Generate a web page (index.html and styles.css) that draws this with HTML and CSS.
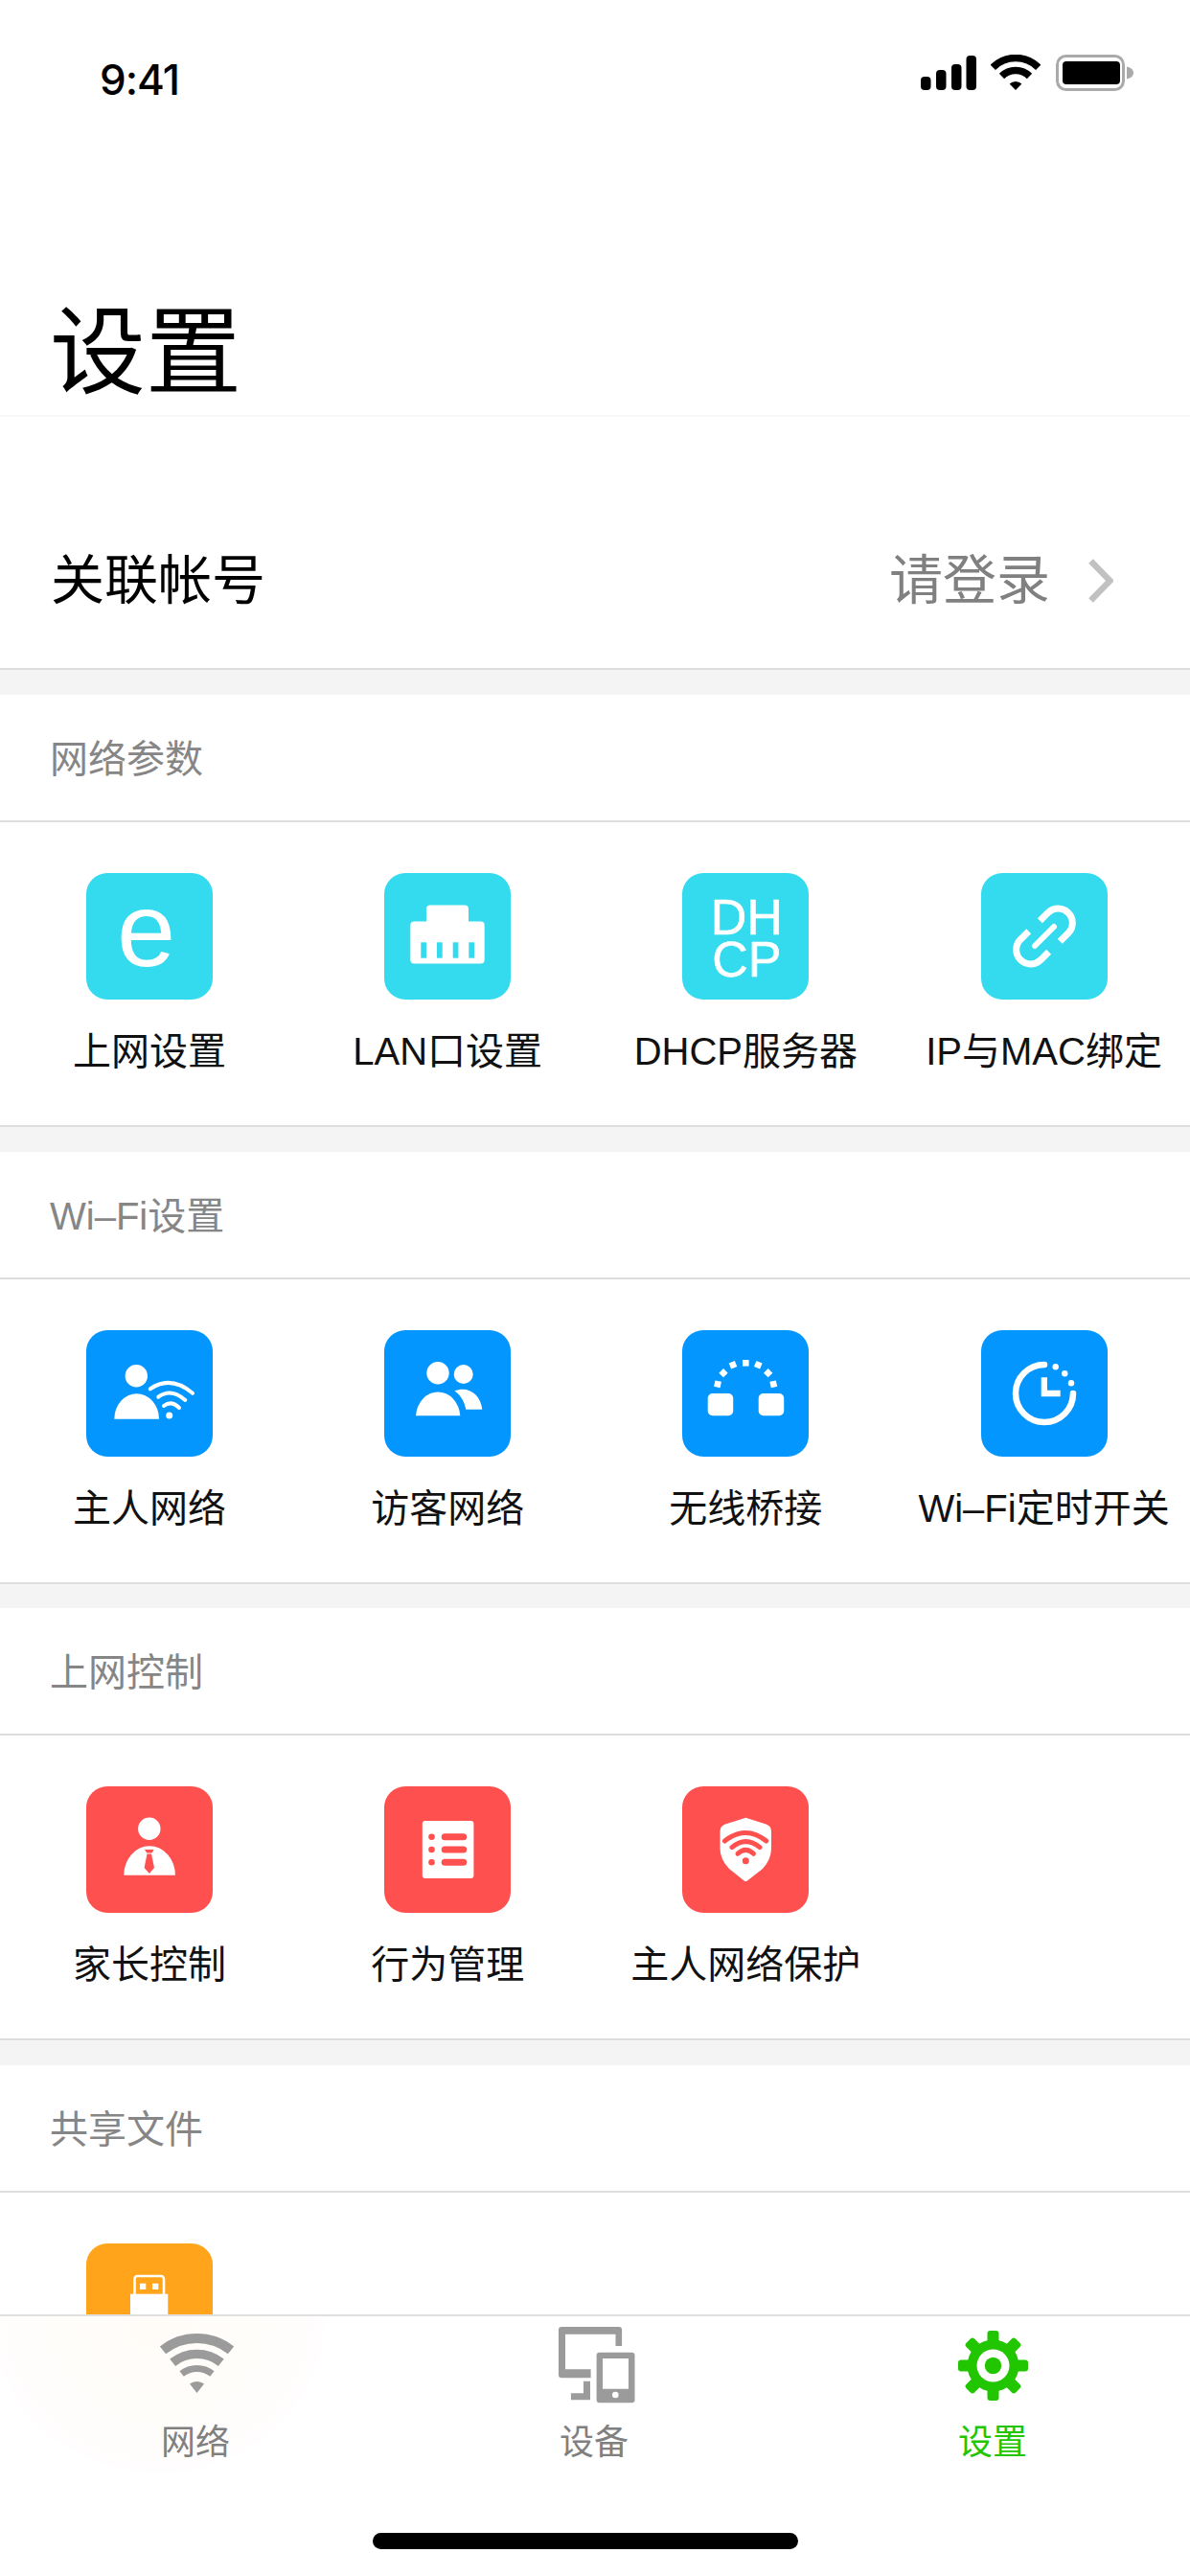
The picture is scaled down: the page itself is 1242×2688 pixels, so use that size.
FILE: index.html
```html
<!DOCTYPE html>
<html lang="zh-CN">
<head>
<meta charset="utf-8">
<title>设置</title>
<link rel="stylesheet" href="styles.css">
</head>
<body>
<div class="app">
  <div class="status">
    <span class="time">9:41</span>
    <div class="status-icons">
      <svg class="s-signal" width="58" height="36" viewBox="0 0 58 36"><rect x="0" y="22" width="10.5" height="14" rx="4"/><rect x="16" y="15" width="10.5" height="21" rx="4"/><rect x="32" y="9" width="10.5" height="27" rx="4"/><rect x="47.5" y="0" width="10.5" height="36" rx="4"/></svg>
      <svg class="s-wifi" width="52" height="37" viewBox="0 0 52 37"><path d="M2.3 13.3A33.5 33.5 0 0 1 49.7 13.3" fill="none" stroke="#000" stroke-width="7.5"/><path d="M11.5 22.5A20.5 20.5 0 0 1 40.5 22.5" fill="none" stroke="#000" stroke-width="7.5"/><path d="M26 37L19.6 30.6A9 9 0 0 1 32.4 30.6Z"/></svg>
      <svg class="s-batt" width="81" height="38" viewBox="0 0 81 38"><rect x="1.5" y="1.5" width="69" height="35" rx="9" fill="none" stroke="#aaa" stroke-width="3"/><rect x="7" y="7" width="60" height="24" rx="4"/><path d="M74 12.5Q81 14 81 19T74 25.5Z" fill="#aaa"/></svg>
    </div>
  </div>
  <header class="title-bar"><h1 class="title">设置</h1></header>
  <main class="content">
    <div class="account">
      <span class="account-name">关联帐号</span>
      <span class="account-action">请登录</span>
      <svg class="chevron" width="27" height="46" viewBox="0 0 27 46"><path d="M3.5 2.5L23.5 23L3.5 43.5" fill="none" stroke="#c1c1c1" stroke-width="6.5"/></svg>
    </div>

    <section class="group">
      <h2 class="group-title">网络参数</h2>
      <div class="grid">
        <div class="item">
          <div class="tile cyan tile-e">e</div>
          <span class="label">上网设置</span>
        </div>
        <div class="item">
          <svg class="tile cyan" viewBox="0 0 132 132"><path fill="#fff" d="M48 33.5H84Q88 33.5 88 37.5V50.5H100.7Q104.7 50.5 104.7 54.5V90.5Q104.7 94.5 100.7 94.5H31.3Q27.3 94.5 27.3 90.5V54.5Q27.3 50.5 31.3 50.5H44V37.5Q44 33.5 48 33.5Z"/><g fill="#34dbee"><rect x="38.3" y="72.3" width="5.7" height="16.4"/><rect x="55" y="72.3" width="5.7" height="16.4"/><rect x="71.7" y="72.3" width="5.7" height="16.4"/><rect x="88.3" y="72.3" width="5.7" height="16.4"/></g></svg>
          <span class="label">LAN口设置</span>
        </div>
        <div class="item">
          <div class="tile cyan tile-dhcp">DH<br>CP</div>
          <span class="label">DHCP服务器</span>
        </div>
        <div class="item">
          <svg class="tile cyan" viewBox="0 0 132 132"><g fill="none" stroke="#fff"><path stroke-width="7" d="M61.4 49.8L70.1 41.1A15 15 0 0 1 91.3 62.3L82.3 71.3"/><path stroke-width="7" d="M70.6 82.2L61.9 90.9A15 15 0 0 1 40.7 69.7L49.7 60.7"/><path stroke-width="6" stroke-linecap="round" d="M56 76L76 56"/></g></svg>
          <span class="label">IP与MAC绑定</span>
        </div>
      </div>
    </section>

    <section class="group">
      <h2 class="group-title">Wi–Fi设置</h2>
      <div class="grid">
        <div class="item">
          <svg class="tile blue" viewBox="0 0 132 132"><circle cx="52.3" cy="47.7" r="11.7" fill="#fff"/><path fill="#fff" d="M29.3 92.7A23.3 26.4 0 0 1 76 92.7Z"/><g fill="none" stroke="#fff" stroke-width="4" stroke-linecap="round"><path d="M66.7 61.3Q88 46.5 111 65.7"/><path d="M75.3 69.7Q88.5 60 103.3 73"/><path d="M81 79Q89 73 97 81"/></g><circle cx="86.7" cy="89" r="3.5" fill="#fff"/></svg>
          <span class="label">主人网络</span>
        </div>
        <div class="item">
          <svg class="tile blue" viewBox="0 0 132 132"><g fill="#fff"><circle cx="56" cy="44.7" r="11.7"/><circle cx="82.7" cy="46" r="10"/><path d="M33 89.3A23.2 26.6 0 0 1 79.3 89.3Z"/><path d="M73.3 63.3C87 58 100.5 66 102.3 82.7H85.3C83.5 74 79.5 67.5 73.3 63.3Z"/></g></svg>
          <span class="label">访客网络</span>
        </div>
        <div class="item">
          <svg class="tile blue" viewBox="0 0 132 132"><g fill="#fff"><rect x="26.7" y="66" width="26.5" height="23.3" rx="5"/><rect x="79.7" y="66" width="26.5" height="23.3" rx="5"/><rect x="63" y="31" width="6.6" height="6.6"/><rect x="49.7" y="33" width="6.6" height="6.6" transform="rotate(-22 53 36.3)"/><rect x="39.7" y="41.4" width="6.6" height="6.6" transform="rotate(-45 43 44.7)"/><rect x="33.7" y="53" width="6.6" height="6.6" transform="rotate(-78 37 56.3)"/><rect x="76" y="33" width="6.6" height="6.6" transform="rotate(22 79.3 36.3)"/><rect x="86.4" y="41.4" width="6.6" height="6.6" transform="rotate(45 89.7 44.7)"/><rect x="92" y="53" width="6.6" height="6.6" transform="rotate(78 95.3 56.3)"/></g></svg>
          <span class="label">无线桥接</span>
        </div>
        <div class="item">
          <svg class="tile blue" viewBox="0 0 132 132"><path fill="none" stroke="#fff" stroke-width="6.5" stroke-linecap="round" d="M66 36A30 30 0 1 0 96 66"/><g fill="#fff"><circle cx="77.7" cy="38.3" r="3.2"/><circle cx="87.3" cy="45.3" r="3.2"/><circle cx="94" cy="55.3" r="3.2"/><path d="M62.7 49.3H69V62.7H82.7V69.3H62.7Z"/></g></svg>
          <span class="label">Wi–Fi定时开关</span>
        </div>
      </div>
    </section>

    <section class="group">
      <h2 class="group-title">上网控制</h2>
      <div class="grid">
        <div class="item">
          <svg class="tile red" viewBox="0 0 132 132"><circle cx="65.8" cy="44.3" r="11.7" fill="#fff"/><path fill="#fff" d="M39.3 92.7A26.8 30.4 0 0 1 92.9 92.7Z"/><g fill="#ff5050"><path d="M61 66H70.7L68.5 69.5H63.2Z"/><path d="M63.5 70.5H68L71 85L65.8 91L60.6 85Z"/></g></svg>
          <span class="label">家长控制</span>
        </div>
        <div class="item">
          <svg class="tile red" viewBox="0 0 132 132"><rect x="39.8" y="36" width="53.6" height="60" rx="3" fill="#fff"/><g fill="#ff5050"><circle cx="49.5" cy="52.7" r="3.3"/><circle cx="49.5" cy="66" r="3.3"/><circle cx="49.5" cy="79.3" r="3.3"/><rect x="59.7" y="49.2" width="26.5" height="7" rx="3.5"/><rect x="59.7" y="62.5" width="26.5" height="7" rx="3.5"/><rect x="59.7" y="75.8" width="26.5" height="7" rx="3.5"/></g></svg>
          <span class="label">行为管理</span>
        </div>
        <div class="item">
          <svg class="tile red" viewBox="0 0 132 132"><path fill="#fff" d="M66.3 32.7L87.5 39.6Q93 41.5 93 47V65Q93 76 84 86L68 98.4Q66.3 100 64.6 98.4L49 86Q39.5 76 39.5 65V47Q39.5 41.5 45 39.6Z"/><g fill="none" stroke="#ff5050" stroke-width="5" stroke-linecap="round"><path d="M44.4 57Q66.3 40 87.8 57"/><path d="M52 63.7Q66.3 51.5 81 63.7"/><path d="M58 70.3Q66.3 62.5 74.5 70.3"/></g><circle cx="66.3" cy="77.7" r="3.5" fill="#ff5050"/></svg>
          <span class="label">主人网络保护</span>
        </div>
      </div>
    </section>

    <section class="group">
      <h2 class="group-title">共享文件</h2>
      <div class="grid">
        <div class="item">
          <svg class="tile orange" viewBox="0 0 132 132"><rect x="50.5" y="34" width="30.5" height="22" rx="3" fill="none" stroke="#fff" stroke-width="2.6"/><g fill="#fff"><rect x="56" y="41.7" width="6.3" height="6.3"/><rect x="69" y="41.7" width="6.3" height="6.3"/><rect x="46" y="52.7" width="39.3" height="48"/></g></svg>
        </div>
      </div>
    </section>
  </main>

  <nav class="tabbar">
    <div class="tabs">
      <div class="tab">
        <svg class="tab-icon" viewBox="0 0 90 80"><g transform="translate(7 7)"><g fill="none" stroke="#9b9b9b"><path stroke-width="10" d="M4 17.4A57 57 0 0 1 75 17.4"/><path stroke-width="9.4" d="M14.2 30.2A40.6 40.6 0 0 1 64.8 30.2"/><path stroke-width="7" d="M23.6 42A25.5 25.5 0 0 1 55.4 42"/></g><path fill="#9b9b9b" d="M39.5 62L32 52.6A12 12 0 0 1 47 52.6Z"/></g></svg>
        <span class="tab-label">网络</span>
      </div>
      <div class="tab">
        <svg class="tab-icon" viewBox="0 0 90 80"><g transform="translate(8 0)" fill="#9b9b9b"><path d="M3 0H63Q66.100 0 66.100 3V20H59.500V7.700H7V44.300H33.600V53.300H3Q0 53.300 0 50.300V3Q0 0 3 0Z"/><path d="M26 56.700H33V76.300H12.900V69.300H26Z"/><path fill-rule="evenodd" d="M42.600 26.700H76.500Q79.500 26.700 79.500 29.700V76.300Q79.500 79.300 76.500 79.300H42.600Q39.600 79.300 39.600 76.300V29.700Q39.600 26.700 42.600 26.700ZM46 33V64.700H73V33ZM59.300 67.700A3.300 3.300 0 1 0 59.300 74.300A3.300 3.300 0 1 0 59.300 67.700Z"/></g></svg>
        <span class="tab-label">设备</span>
      </div>
      <div class="tab active">
        <svg class="tab-icon" viewBox="0 0 90 80"><g transform="translate(9 4)"><g fill="#22c600"><circle cx="36.500" cy="36.500" r="27"/><rect x="30.500" y="0" width="12" height="73" rx="3"/><rect x="30.500" y="0" width="12" height="73" rx="3" transform="rotate(45 36.500 36.500)"/><rect x="30.500" y="0" width="12" height="73" rx="3" transform="rotate(90 36.500 36.500)"/><rect x="30.500" y="0" width="12" height="73" rx="3" transform="rotate(135 36.500 36.500)"/></g><circle cx="36.500" cy="36.500" r="17" fill="#fff"/><circle cx="36.500" cy="36.500" r="8.700" fill="#22c600"/></g></svg>
        <span class="tab-label">设置</span>
      </div>
    </div>
    <div class="home-bar"></div>
  </nav>
</div>
</body>
</html>
```

FILE: styles.css
```css
* { box-sizing: border-box; }
html, body { margin: 0; padding: 0; background: #fff; }
body {
  width: 1242px;
  height: 2688px;
  overflow: hidden;
  font-family: "Liberation Sans", "Noto Sans CJK SC", sans-serif;
  color: #000;
}
.app {
  width: 1242px;
  height: 2688px;
  display: flex;
  flex-direction: column;
}

/* Status bar */
.status {
  height: 130px;
  flex: none;
  display: flex;
  justify-content: space-between;
  align-items: flex-start;
  padding: 57px 59px 0 104px;
}
.time {
  font-family: Inter, "Liberation Sans", sans-serif;
  font-weight: 500;
  font-size: 44px;
  line-height: 50px;
  letter-spacing: -1px;
  margin-top: 1px;
}
.status-icons { display: flex; align-items: flex-end; }
.s-signal { margin-bottom: 1px; }
.s-wifi { margin-left: 15px; margin-bottom: 1px; }
.s-batt { margin-left: 16px; }

/* Title */
.title-bar {
  height: 305px;
  flex: none;
  padding: 181px 0 0 52px;
  border-bottom: 2px solid #f8f8f8;
}
.title {
  margin: 0;
  font-size: 100px;
  line-height: 114px;
  font-weight: 400;
}

/* Content */
.content {
  flex: 1;
  min-height: 0;
  overflow: hidden;
  background: #f4f4f4;
}
.account {
  height: 264px;
  margin-bottom: 26px;
  padding: 80px 80px 0 53px;
  display: flex;
  align-items: center;
  border-bottom: 2px solid #ddd;
  background: #fff;
}
.account-name { font-size: 56px; line-height: 70px; flex: 1; }
.account-action { font-size: 56px; line-height: 70px; color: #808080; margin-right: 39px; }
.chevron { flex: none; }

.group {
  height: 476.67px;
  background: #f4f4f4;
}
.group-title {
  height: 133px;
  margin: 0;
  padding: 4px 0 0 52px;
  background: #fff;
  border-bottom: 2px solid #ddd;
  font-size: 40px;
  line-height: 127px;
  font-weight: 400;
  color: #868686;
}
.grid {
  height: 318px;
  padding: 53px 0 0 0.4px;
  background: #fff;
  border-bottom: 2px solid #ddd;
  display: grid;
  grid-template-columns: repeat(4, 311.2px);
  align-content: start;
}
.item {
  display: flex;
  flex-direction: column;
  align-items: center;
}
.tile {
  width: 132px;
  height: 132px;
  border-radius: 22px;
  flex: none;
  display: block;
}
.cyan { background: #34dbee; }
.blue { background: #0496ff; }
.red { background: #ff5050; }
.orange { background: #ffa41b; }
.tile-e {
  padding-right: 7px;
  text-align: center;
  font-size: 110px;
  line-height: 117px;
  color: #fff;
}
.tile-dhcp {
  padding: 25px 0 0 2px;
  text-align: center;
  font-size: 52px;
  line-height: 43.5px;
  color: #fff;
  -webkit-text-stroke: 0.6px #fff;
}
.label {
  margin-top: 30px;
  font-size: 40px;
  line-height: 48px;
  white-space: nowrap;
  color: #111;
}

/* Tab bar */
.tabbar {
  height: 273px;
  flex: none;
  border-top: 2px solid #e0e0e0;
  padding-top: 11px;
  background:
    radial-gradient(ellipse 175px 165px at 165px 0, #fffcf8 0, #fffdfa 55%, #fffdfd 97%, rgba(255,255,255,0) 100%),
    #fff;
}
.tabs {
  display: grid;
  grid-template-columns: repeat(3, 408px);
  column-gap: 8px;
}
.tab {
  display: flex;
  flex-direction: column;
  align-items: center;
}
.tab-icon { width: 90px; height: 80px; display: block; }
.tab-label {
  margin-top: 17px;
  font-size: 36px;
  line-height: 48px;
  color: #808080;
}
.tab.active .tab-label { color: #22c600; }
.home-bar {
  width: 444px;
  height: 17px;
  margin: 70px 0 0 389px;
  background: #000;
  border-radius: 9px;
}
```
